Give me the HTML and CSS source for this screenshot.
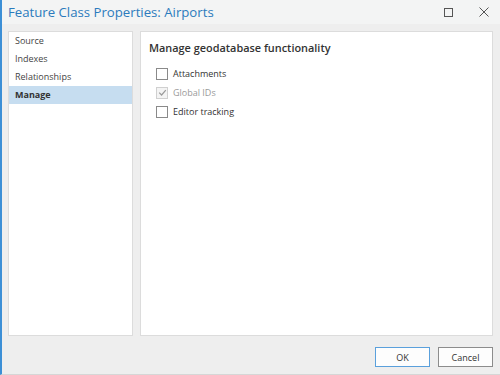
FILE: index.html
```html
<!DOCTYPE html>
<html lang="en">
<head>
    <meta charset="UTF-8">
    <title>Feature Class Properties: Airports</title>
    <link rel="stylesheet" href="styles.css">
</head>
<body>
    <div class="dialog">
        <div class="titlebar">
            <span class="title">Feature Class Properties: Airports</span>
            <div class="controls">
                <svg width="9" height="9" viewBox="0 0 9 9"><rect x="0.5" y="0.5" width="8" height="8" fill="none" stroke="#555" stroke-width="1"/></svg>
                <svg width="10" height="10" viewBox="0 0 10 10"><path d="M0.5 0.5 L9.5 9.5 M9.5 0.5 L0.5 9.5" stroke="#555" stroke-width="1"/></svg>
            </div>
        </div>
        <div class="content">
            <ul class="nav">
                <li>Source</li>
                <li>Indexes</li>
                <li>Relationships</li>
                <li class="active">Manage</li>
            </ul>
            <div class="panel">
                <h2>Manage geodatabase functionality</h2>
                <label class="check"><span class="box"></span>Attachments</label>
                <label class="check disabled"><span class="box">
                    <svg width="9" height="9" viewBox="0 0 9 9"><path d="M1.2 4.6 L3.6 7 L7.8 2.2" fill="none" stroke="#9a9a9a" stroke-width="1.2"/></svg>
                </span>Global IDs</label>
                <label class="check"><span class="box"></span>Editor tracking</label>
            </div>
        </div>
        <div class="footer">
            <button class="btn primary">OK</button>
            <button class="btn">Cancel</button>
        </div>
    </div>
</body>
</html>
```

FILE: styles.css
```css
body {
    margin: 0;
    font-family: "Open Sans", "Noto Sans", sans-serif;
    background-color: #eeeeee;
    color: #333;
}
.dialog {
    width: 500px;
    height: 375px;
    box-sizing: border-box;
    border-left: 2px solid #3c8fd6;
    border-bottom: 1px solid #d6d6d6;
    display: flex;
    flex-direction: column;
    background-color: #eeeeee;
}
.titlebar {
    height: 24px;
    flex-shrink: 0;
    background-color: #f3f4f4;
    display: flex;
    align-items: center;
    justify-content: space-between;
    padding-left: 6px;
}
.title {
    color: #2b7bbd;
    font-size: 13.2px;
}
.controls {
    display: flex;
    align-items: center;
    gap: 26px;
    padding-right: 11px;
}
.controls svg {
    display: block;
}
.content {
    display: flex;
    gap: 7px;
    padding: 7px 7px 0 6px;
}
.nav {
    list-style: none;
    margin: 0;
    padding: 0;
    width: 123px;
    height: 303px;
    flex-shrink: 0;
    background-color: #fff;
    border: 1px solid #dcdcdc;
    font-size: 9px;
}
.nav li {
    height: 18px;
    line-height: 18px;
    padding-left: 6px;
    color: #444;
}
.nav li.active {
    background-color: #c6ddf0;
    font-weight: bold;
    color: #333;
}
.panel {
    width: 335px;
    height: 303px;
    flex-shrink: 0;
    background-color: #fff;
    border: 1px solid #dcdcdc;
    padding: 0 8px;
}
.panel h2 {
    font-size: 10.9px;
    font-weight: 600;
    margin: 8px 0 9px 0;
    color: #333;
}
.check {
    display: flex;
    align-items: center;
    height: 19px;
    padding-left: 7px;
    font-size: 9px;
    color: #333;
}
.check.disabled {
    color: #9a9a9a;
}
.box {
    width: 10px;
    height: 10px;
    border: 1px solid #8a8a8a;
    background-color: #fff;
    margin-right: 5px;
    display: flex;
    align-items: center;
    justify-content: center;
}
.check.disabled .box {
    border-color: #d0d0d0;
    background-color: #f4f4f4;
}
.footer {
    display: flex;
    justify-content: flex-end;
    gap: 8px;
    padding: 11px 7px 0 0;
}
.btn {
    width: 55px;
    height: 20px;
    font-family: "Open Sans", "Noto Sans", sans-serif;
    font-size: 9px;
    background-color: #fdfdfd;
    border: 1px solid #8c8c8c;
    color: #333;
    padding: 0;
}
.btn.primary {
    border-color: #5aa0dc;
}
```
